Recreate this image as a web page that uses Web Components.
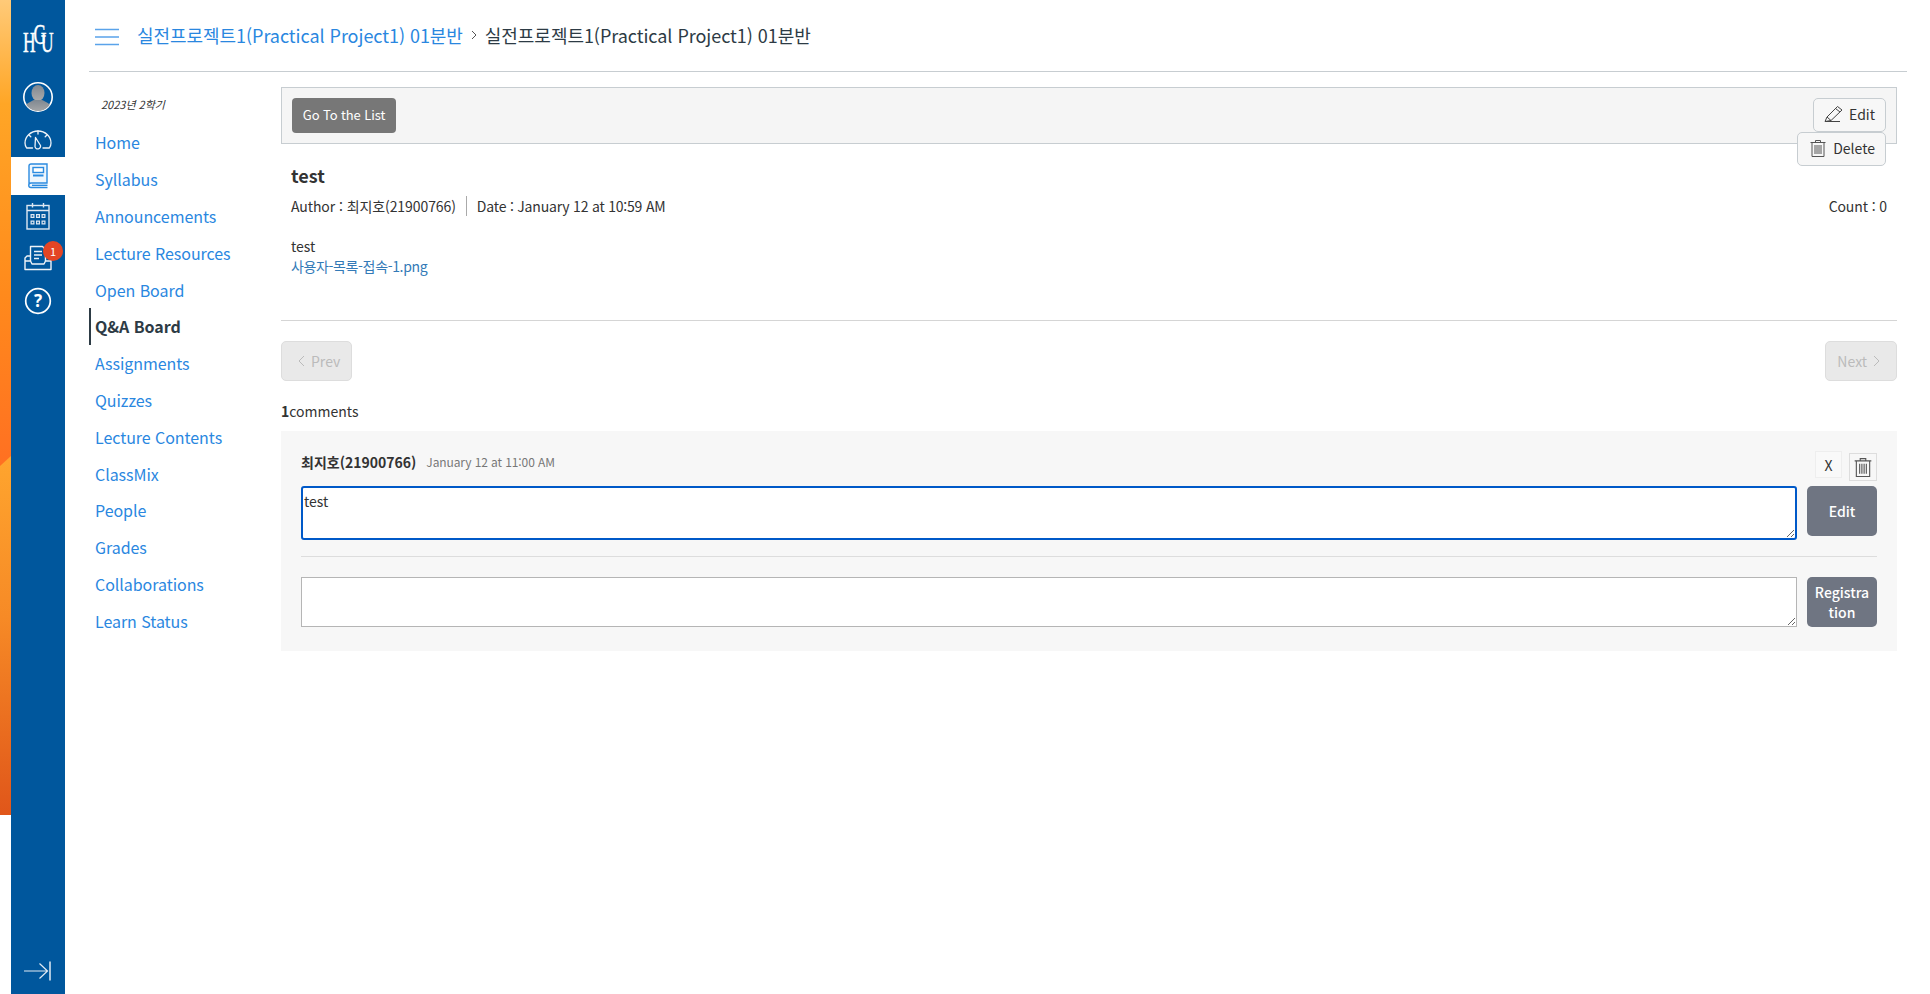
<!DOCTYPE html>
<html lang="ko">
<head>
<meta charset="utf-8">
<title>Q&amp;A Board</title>
<style>
  html, body { margin: 0; height: 100%; background: #fff; }
  body {
    font-family: "Noto Sans CJK KR", "Noto Sans", sans-serif;
    font-size: 14px;
    color: #333;
    display: flex;
    overflow: hidden;
  }
</style>
</head>
<body>
<lms-wallpaper></lms-wallpaper>
<lms-rail></lms-rail>
<lms-page>
  <course-header slot="header"></course-header>
  <course-nav slot="nav" term="2023년 2학기">
    <nav-item>Home</nav-item>
    <nav-item>Syllabus</nav-item>
    <nav-item>Announcements</nav-item>
    <nav-item>Lecture Resources</nav-item>
    <nav-item>Open Board</nav-item>
    <nav-item active>Q&amp;A Board</nav-item>
    <nav-item>Assignments</nav-item>
    <nav-item>Quizzes</nav-item>
    <nav-item>Lecture Contents</nav-item>
    <nav-item>ClassMix</nav-item>
    <nav-item>People</nav-item>
    <nav-item>Grades</nav-item>
    <nav-item>Collaborations</nav-item>
    <nav-item>Learn Status</nav-item>
  </course-nav>
  <board-toolbar></board-toolbar>
  <post-view></post-view>
  <post-pager></post-pager>
  <comment-panel></comment-panel>
</lms-page>

<script>
const TRASH_ICON = (size) => `
  <svg width="${size}" height="${size}" viewBox="0 0 18 18" fill="none" stroke="#555" stroke-width="1">
    <path d="M1.500 3.500h15M6.500 3.500V1.500h5v2M3 3.500v14h12v-14"/>
    <path d="M6 6v9M8 6v9M10 6v9M12 6v9"/>
  </svg>`;

class LmsWallpaper extends HTMLElement {
  constructor() {
    super();
    this.attachShadow({ mode: 'open' });
    this.shadowRoot.innerHTML = `
      <style>
        :host { display: block; flex: 0 0 11px; height: 815px; }
        svg { display: block; width: 100%; height: 100%; }
      </style>
      <svg viewBox="0 0 11 815" preserveAspectRatio="none">
        <defs>
          <linearGradient id="a" x1="0" y1="0" x2="0" y2="1">
            <stop offset="0" stop-color="#ffca78"/>
            <stop offset="0.22" stop-color="#ffa626"/>
            <stop offset="0.62" stop-color="#ff8a1c"/>
            <stop offset="1" stop-color="#ff6f22"/>
          </linearGradient>
          <linearGradient id="b" x1="0" y1="0" x2="0" y2="1">
            <stop offset="0" stop-color="#ffa52e"/>
            <stop offset="0.45" stop-color="#f68a26"/>
            <stop offset="1" stop-color="#e0561a"/>
          </linearGradient>
        </defs>
        <rect width="11" height="472" fill="url(#a)"/>
        <polygon points="0,466 11,456 11,815 0,815" fill="url(#b)"/>
      </svg>`;
  }
}

class RailItem extends HTMLElement {
  constructor() {
    super();
    this.attachShadow({ mode: 'open' });
    this.shadowRoot.innerHTML = `
      <style>
        :host {
          display: flex;
          align-items: center;
          justify-content: center;
          position: relative;
          height: var(--h, 38px);
        }
        :host([active]) { background: #fff; }
        svg { display: block; }
      </style>
      <slot></slot>`;
  }
}

class LmsRail extends HTMLElement {
  constructor() {
    super();
    this.attachShadow({ mode: 'open' });
    this.shadowRoot.innerHTML = `
      <style>
        :host {
          display: flex;
          flex-direction: column;
          flex: 0 0 54px;
          height: 100%;
          background: #00579d;
        }
        .logo {
          height: 72px;
          padding-top: 4px;
          box-sizing: border-box;
          display: flex;
          align-items: center;
          justify-content: center;
        }
        .logo svg { display: block; overflow: visible; }
        .spacer { flex: 1; }
        .badge {
          position: absolute;
          left: 32px;
          top: 4px;
          width: 20px;
          height: 20px;
          border-radius: 50%;
          background: #e34525;
          color: #fff;
          font-size: 11px;
          line-height: 20px;
          text-align: center;
        }
      </style>
      <div class="logo">
        <svg width="30" height="32" viewBox="0 0 30 32">
          <text transform="scale(0.58 1)" fill="#fff" stroke="#fff" stroke-width="0.5" font-family="Liberation Serif, serif" font-size="30" x="0 18 31" y="30 22 30">HGU</text>
        </svg>
      </div>
      <rail-item style="--h:50px">
        <svg width="32" height="32" viewBox="0 0 32 32">
          <defs>
            <clipPath id="av"><circle cx="16" cy="16" r="14"/></clipPath>
            <linearGradient id="avg" x1="0" y1="0" x2="0" y2="1">
              <stop offset="0" stop-color="#808891"/><stop offset="1" stop-color="#ababab"/>
            </linearGradient>
          </defs>
          <circle cx="16" cy="16" r="14.2" fill="#00579d" stroke="#fff" stroke-width="1.6"/>
          <g clip-path="url(#av)" fill="url(#avg)">
            <ellipse cx="16" cy="12" rx="6.500" ry="8"/>
            <path d="M1 32c0-9 7-11 11-13h8c4 2 11 4 11 13z"/>
          </g>
        </svg>
      </rail-item>
      <rail-item style="--h:35px">
        <svg width="28" height="20" viewBox="0 0 28 20" fill="none" stroke="#eef3f8" stroke-width="1.3" stroke-linecap="round" stroke-linejoin="round">
          <path d="M8.500 18H2.600C1.600 16.500 1 14.800 1 13A13 12 0 0 1 27 13C27 14.800 26.400 16.500 25.400 18H19"/>
          <path d="M14 1v3M5 5l1.800 1.800M23 5l-1.800 1.800"/>
          <path d="M11.500 7.500L16.500 15.500A2.800 2.800 0 1 1 11 16.500z"/>
        </svg>
      </rail-item>
      <rail-item active>
        <svg width="22" height="26" viewBox="0 0 22 26" fill="none" stroke="#2b8be0" stroke-width="1.4">
          <path d="M2 21V3a2 2 0 0 1 2-2h16v19H4a2 2 0 0 0 0 4.500h16.500" fill="#eef6fd"/>
          <path d="M20.500 22.300H5"/>
          <rect x="6" y="4.500" width="10.500" height="5" fill="#fff"/>
          <path d="M6 12.500h10.500" stroke-width="2"/>
        </svg>
      </rail-item>
      <rail-item style="--h:42px">
        <svg width="24" height="28" viewBox="0 0 24 28" fill="none" stroke="#dfe8f2" stroke-width="1.4">
          <rect x="1" y="3.500" width="22" height="23.500"/>
          <path d="M1 8.500h22M6.500 1v4.500M17.500 1v4.500"/>
          <g fill="#dfe8f2" stroke="none">
            <path d="M4.500 12h4v4h-4zM10 12h4v4h-4zM15.500 12h4v4h-4zM4.500 18.500h4v4h-4zM10 18.500h4v4h-4zM15.500 18.500h4v4h-4z"/>
          </g>
          <g fill="#00579d" stroke="none">
            <path d="M5.700 13.200h1.600v1.600H5.700zM11.200 13.200h1.600v1.600h-1.600zM16.700 13.200h1.600v1.600h-1.600zM5.700 19.700h1.600v1.600H5.700zM11.200 19.700h1.600v1.600h-1.600zM16.700 19.700h1.600v1.600h-1.600z"/>
          </g>
        </svg>
      </rail-item>
      <rail-item style="--h:42px">
        <svg width="28" height="26" viewBox="0 0 28 26" fill="none" stroke="#eef3f8" stroke-width="1.4" stroke-linejoin="round">
          <path d="M6.500 16V1.500h12l3 3V16"/>
          <path d="M10 6.500h8M10 10h8M10 13.500h5"/>
          <path d="M6.500 11H3l-2 2v11.500h26V13l-2-2h-3.500"/>
          <path d="M1 16h5.500l1.500 3h12l1.500-3H27"/>
        </svg>
        <span class="badge">1</span>
      </rail-item>
      <rail-item style="--h:44px">
        <svg width="28" height="28" viewBox="0 0 28 28">
          <circle cx="14" cy="14" r="12.300" fill="none" stroke="#fff" stroke-width="1.700"/>
          <text x="14" y="20" fill="#fff" font-family="Noto Sans, sans-serif" font-size="17" font-weight="700" text-anchor="middle">?</text>
        </svg>
      </rail-item>
      <div class="spacer"></div>
      <rail-item style="--h:46px; align-items:flex-start">
        <svg width="28" height="20" viewBox="0 0 28 20" fill="none" stroke="#e2ebf4" stroke-width="1.200" style="margin-top:13px">
          <path d="M0 10h24M15.500 2.500l8 7.500-8 7.500"/>
          <path d="M26 0.500v19" stroke-width="1.500"/>
        </svg>
      </rail-item>`;
  }
}

class LmsPage extends HTMLElement {
  constructor() {
    super();
    this.attachShadow({ mode: 'open' });
    this.shadowRoot.innerHTML = `
      <style>
        :host {
          display: block;
          flex: 0 0 1818px;
          margin-left: 24px;
          box-sizing: border-box;
        }
        .body { display: flex; padding-right: 10px; }
        .nav { flex: 0 0 192px; }
        .content { flex: 1; min-width: 0; padding-top: 15px; }
      </style>
      <slot name="header"></slot>
      <div class="body">
        <div class="nav"><slot name="nav"></slot></div>
        <div class="content"><slot></slot></div>
      </div>`;
  }
}

class CourseHeader extends HTMLElement {
  constructor() {
    super();
    this.attachShadow({ mode: 'open' });
    this.shadowRoot.innerHTML = `
      <style>
        :host {
          display: flex;
          align-items: center;
          height: 71px;
          padding-left: 6px;
          border-bottom: 1px solid #c7cdd1;
          font-size: 18px;
          color: #2d3b45;
        }
        .menu { display: block; margin: 3px 18px 0 0; }
        .crumbs { display: flex; align-items: center; margin-top: -2px; letter-spacing: -0.05px; }
        a { color: #2a87df; text-decoration: none; }
        .sep { display: block; margin: 1px 8px 0 8px; }
      </style>
      <svg class="menu" width="24" height="18" viewBox="0 0 24 18" stroke="#5aa3ea" stroke-width="1.500">
        <path d="M0 1.500h24M0 9h24M0 16.500h24"/>
      </svg>
      <div class="crumbs">
        <a>실전프로젝트1(Practical Project1) 01분반</a>
        <svg class="sep" width="6" height="10" viewBox="0 0 6 10" fill="none" stroke="#555" stroke-width="1"><path d="M1 1l4 4-4 4"/></svg>
        <span>실전프로젝트1(Practical Project1) 01분반</span>
      </div>`;
  }
}

class CourseNav extends HTMLElement {
  constructor() {
    super();
    this.attachShadow({ mode: 'open' });
    this.shadowRoot.innerHTML = `
      <style>
        :host { display: block; }
        .term {
          height: 18px;
          line-height: 18px;
          margin: 23px 0 11px 12px;
          font-size: 11px;
          font-style: italic;
          color: #333;
        }
      </style>
      <div class="term"></div>
      <slot></slot>`;
    this.shadowRoot.querySelector('.term').textContent = this.getAttribute('term') || '';
  }
}

class NavItem extends HTMLElement {
  constructor() {
    super();
    this.attachShadow({ mode: 'open' });
    this.shadowRoot.innerHTML = `
      <style>
        :host {
          display: flex;
          align-items: center;
          height: 36.800px;
          padding-left: 4px;
          box-sizing: border-box;
          font-size: 16px;
          letter-spacing: -0.05px;
          color: #2a87df;
          border-left: 2px solid transparent;
        }
        :host([active]) {
          color: #2d3b45;
          font-weight: 700;
          border-left-color: #2d3b45;
        }
      </style>
      <slot></slot>`;
  }
}

class BoardToolbar extends HTMLElement {
  constructor() {
    super();
    this.attachShadow({ mode: 'open' });
    this.shadowRoot.innerHTML = `
      <style>
        :host {
          display: flex;
          justify-content: space-between;
          align-items: flex-start;
          height: 57px;
          box-sizing: border-box;
          padding: 10px;
          background: #f5f5f5;
          border: 1px solid #c7cdd1;
        }
        button { font: inherit; cursor: pointer; box-sizing: border-box; }
        .go {
          width: 104px;
          height: 35px;
          padding: 0 0 2px 0;
          background: #777;
          color: #fff;
          border: 0;
          border-radius: 4px;
          font-size: 13px;
          letter-spacing: -0.1px;
        }
        .actions { display: flex; flex-direction: column; align-items: flex-end; }
        .act {
          display: flex;
          align-items: center;
          justify-content: center;
          gap: 5px;
          height: 34px;
          padding: 0 10px 2px 10px;
          background: #f7f7f7;
          color: #333;
          border: 1px solid #c7cdd1;
          border-radius: 5px;
          font-size: 14px;
        }
        .act.del { gap: 6px; padding-left: 11px; }
        svg { display: block; }
      </style>
      <button class="go">Go To the List</button>
      <div class="actions">
        <button class="act">
          <svg width="20" height="18" viewBox="0 0 20 18" fill="none" stroke="#444" stroke-width="1">
            <path d="M1 16.500l2-4.500L13.500 1.500l4.500 3.500L7 15.500zM3 12l4 3.500M11.500 3.500l4.500 3.500M1 16.500h15"/>
          </svg>
          Edit
        </button>
        <button class="act del">${TRASH_ICON(18)} Delete</button>
      </div>`;
  }
}

class PostView extends HTMLElement {
  constructor() {
    super();
    this.attachShadow({ mode: 'open' });
    this.shadowRoot.innerHTML = `
      <style>
        :host {
          display: block;
          padding: 18px 10px 0 10px;
          height: 177px;
          box-sizing: border-box;
          border-bottom: 1px solid #d5d5d5;
        }
        h2 { margin: 0; font-size: 18px; line-height: 26px; font-weight: 700; color: #333; }
        .meta {
          display: flex;
          align-items: center;
          margin-top: 8px;
          height: 20px;
          font-size: 14px;
        }
        .author { letter-spacing: -0.08px; }
        .date { letter-spacing: -0.2px; }
        .bar { width: 1px; height: 20px; background: #aaa; margin: 0 10px 0 10px; }
        .count { margin-left: auto; letter-spacing: -0.1px; }
        .text { margin-top: 20px; line-height: 20px; font-size: 14px; }
        a { display: block; color: #337ab7; text-decoration: none; line-height: 20px; font-size: 14px; letter-spacing: -0.36px; }
      </style>
      <h2>test</h2>
      <div class="meta">
        <span class="author">Author : 최지호(21900766)</span>
        <span class="bar"></span>
        <span class="date">Date : January 12 at 10:59 AM</span>
        <span class="count">Count : 0</span>
      </div>
      <div class="text">test</div>
      <a>사용자-목록-접속-1.png</a>`;
  }
}

class PostPager extends HTMLElement {
  constructor() {
    super();
    this.attachShadow({ mode: 'open' });
    this.shadowRoot.innerHTML = `
      <style>
        :host { display: flex; justify-content: space-between; margin-top: 20px; }
        button {
          display: flex;
          align-items: center;
          gap: 6px;
          box-sizing: border-box;
          height: 40px;
          padding: 0 11px 0 16px;
          font: inherit;
          font-size: 14px;
          color: #bbb;
          background: #e9e9e9;
          border: 1px solid #ddd;
          border-radius: 5px;
        }
        button + button { padding: 0 16px 0 11px; }
        svg { display: block; }
      </style>
      <button disabled>
        <svg width="7" height="12" viewBox="0 0 7 12" fill="none" stroke="#bbb"><path d="M6 1L1 6l5 5"/></svg>
        Prev
      </button>
      <button disabled>
        Next
        <svg width="7" height="12" viewBox="0 0 7 12" fill="none" stroke="#bbb"><path d="M1 1l5 5-5 5"/></svg>
      </button>`;
  }
}

class CommentPanel extends HTMLElement {
  constructor() {
    super();
    this.attachShadow({ mode: 'open' });
    this.shadowRoot.innerHTML = `
      <style>
        :host { display: block; margin-top: 20px; }
        .count { height: 20px; line-height: 20px; margin-bottom: 10px; font-size: 14px; }
        .panel {
          box-sizing: border-box;
          height: 220px;
          padding: 20px 20px 0 20px;
          background: #f7f7f7;
        }
        .head { display: flex; align-items: flex-start; height: 35px; }
        .who { font-size: 14px; font-weight: 700; line-height: 22px; }
        .when { font-size: 12px; line-height: 22px; color: #777; margin-left: 10px; letter-spacing: -0.1px; }
        .tools { display: flex; align-items: flex-start; gap: 7px; margin-left: auto; }
        .tools button {
          box-sizing: border-box;
          padding: 0;
          display: flex;
          align-items: center;
          justify-content: center;
          font: inherit;
          font-size: 14px;
          color: #333;
          cursor: pointer;
        }
        .x { width: 27px; height: 27px; background: #f9f9f9; border: 1px solid #eee; }
        .del { width: 28px; height: 28px; margin-top: 2px; background: #f7f7f7; border: 1px solid #ddd; }
        .row { display: flex; gap: 10px; align-items: flex-start; }
        textarea {
          flex: 1;
          min-width: 0;
          box-sizing: border-box;
          margin: 0;
          padding: 3px 1px;
          font: inherit;
          font-size: 14px;
          color: #333;
          background: #fff;
          outline: 0;
        }
        .edit textarea { height: 54px; border: 2px solid #0059c8; border-radius: 3px; }
        .reg textarea { height: 50px; border: 1px solid #b5b5b5; border-radius: 0; }
        .submit {
          flex: 0 0 70px;
          box-sizing: border-box;
          height: 50px;
          padding: 0;
          font: inherit;
          font-size: 14px;
          font-weight: 500;
          line-height: 20px;
          color: #fff;
          background: #6f7582;
          border: 0;
          border-radius: 5px;
          overflow-wrap: anywhere;
        }
        .sub-sep { height: 1px; background: #ddd; margin: 16px 0 20px 0; }
        svg { display: block; }
      </style>
      <div class="count"><b>1</b>comments</div>
      <div class="panel">
        <div class="head">
          <span class="who">최지호(21900766)</span>
          <span class="when">January 12 at 11:00 AM</span>
          <div class="tools">
            <button class="x">X</button>
            <button class="del">${TRASH_ICON(20)}</button>
          </div>
        </div>
        <div class="row edit">
          <textarea>test</textarea>
          <button class="submit">Edit</button>
        </div>
        <div class="sub-sep"></div>
        <div class="row reg">
          <textarea></textarea>
          <button class="submit">Registra<br>tion</button>
        </div>
      </div>`;
  }
}

customElements.define('lms-wallpaper', LmsWallpaper);
customElements.define('rail-item', RailItem);
customElements.define('lms-rail', LmsRail);
customElements.define('lms-page', LmsPage);
customElements.define('course-header', CourseHeader);
customElements.define('course-nav', CourseNav);
customElements.define('nav-item', NavItem);
customElements.define('board-toolbar', BoardToolbar);
customElements.define('post-view', PostView);
customElements.define('post-pager', PostPager);
customElements.define('comment-panel', CommentPanel);
</script>
</body>
</html>
